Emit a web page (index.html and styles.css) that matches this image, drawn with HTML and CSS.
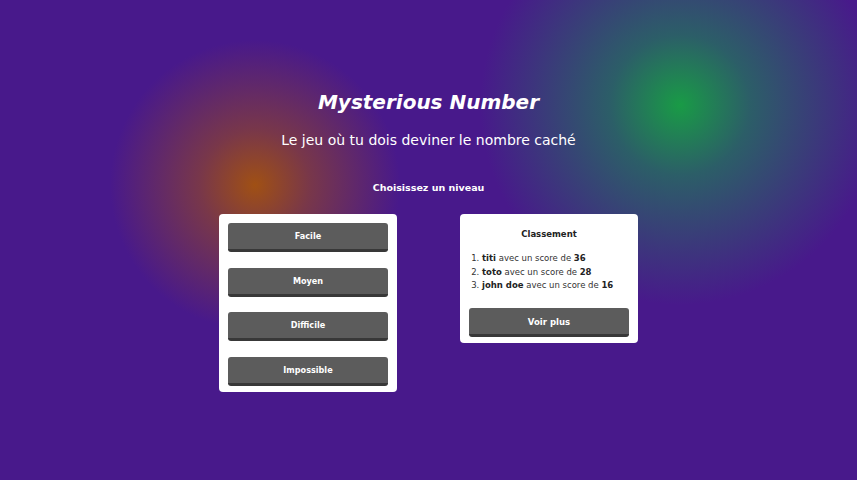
FILE: index.html
```html
<!DOCTYPE html>
<html lang="fr">
<head>
<meta charset="utf-8">
<title>Mysterious Number</title>
<link rel="stylesheet" href="styles.css">
</head>
<body>
<main class="page">
  <h1 class="title">Mysterious Number</h1>
  <p class="subtitle">Le jeu où tu dois deviner le nombre caché</p>
  <p class="choose">Choisissez un niveau</p>
  <div class="cards">
    <div class="card levels">
      <button class="btn">Facile</button>
      <button class="btn">Moyen</button>
      <button class="btn">Difficile</button>
      <button class="btn">Impossible</button>
    </div>
    <div class="card ranking">
      <h2 class="rank-title">Classement</h2>
      <ol class="rank-list">
        <li><b>titi</b> avec un score de <b>36</b></li>
        <li><b>toto</b> avec un score de <b>28</b></li>
        <li><b>john doe</b> avec un score de <b>16</b></li>
      </ol>
      <button class="btn btn-more">Voir plus</button>
    </div>
  </div>
</main>
</body>
</html>
```
FILE: styles.css
```css
html, body {
  margin: 0;
  height: 100%;
}
body {
  font-family: "DejaVu Sans", sans-serif;
  color: #fff;
  background-color: #48198b;
  background-image:
    radial-gradient(circle at 255px 185px, rgba(160, 80, 20, 1) 0px, rgba(160, 80, 20, 0.55) 55px, rgba(72, 25, 139, 0) 145px),
    radial-gradient(circle at 680px 105px, rgba(25, 155, 70, 1) 0px, rgba(25, 140, 80, 0.6) 70px, rgba(72, 25, 139, 0) 200px);
  overflow: hidden;
}
.page {
  display: flex;
  flex-direction: column;
  align-items: center;
  padding-top: 89px;
}
.title {
  margin: 0;
  font-size: 20px;
  font-weight: bold;
  font-style: italic;
  line-height: 26px;
}
.subtitle {
  margin: 16px 0 0;
  font-size: 14px;
  font-weight: normal;
  line-height: 18px;
}
.choose {
  margin: 32px 0 0;
  font-size: 9.5px;
  font-weight: bold;
  line-height: 14px;
}
.cards {
  display: flex;
  align-items: flex-start;
  gap: 63px;
  margin-top: 19px;
}
.card {
  width: 178px;
  box-sizing: border-box;
  background: #fff;
  border-radius: 4px;
  padding: 9px;
  color: #222;
}
.levels {
  display: flex;
  flex-direction: column;
  gap: 15.6px;
  padding-bottom: 6px;
}
.ranking {
  padding-bottom: 5.5px;
}
.btn {
  display: block;
  width: 160px;
  height: 29px;
  box-sizing: border-box;
  border: none;
  border-bottom: 3px solid #383838;
  border-radius: 3px;
  background: #5c5c5c;
  color: #fff;
  font-family: "DejaVu Sans Condensed", "DejaVu Sans", sans-serif;
  font-stretch: condensed;
  font-weight: bold;
  font-size: 9px;
  padding: 0;
}
.btn-more {
  font-size: 9.5px;
}
.rank-title {
  margin: 5px 0 0;
  text-align: center;
  font-size: 8.5px;
  font-weight: bold;
  line-height: 12px;
}
.rank-list {
  margin: 12px 0 15.5px;
  padding-left: 13px;
  font-size: 8.5px;
  line-height: 13.5px;
  color: #333;
}
.rank-list b {
  color: #222;
}
```
